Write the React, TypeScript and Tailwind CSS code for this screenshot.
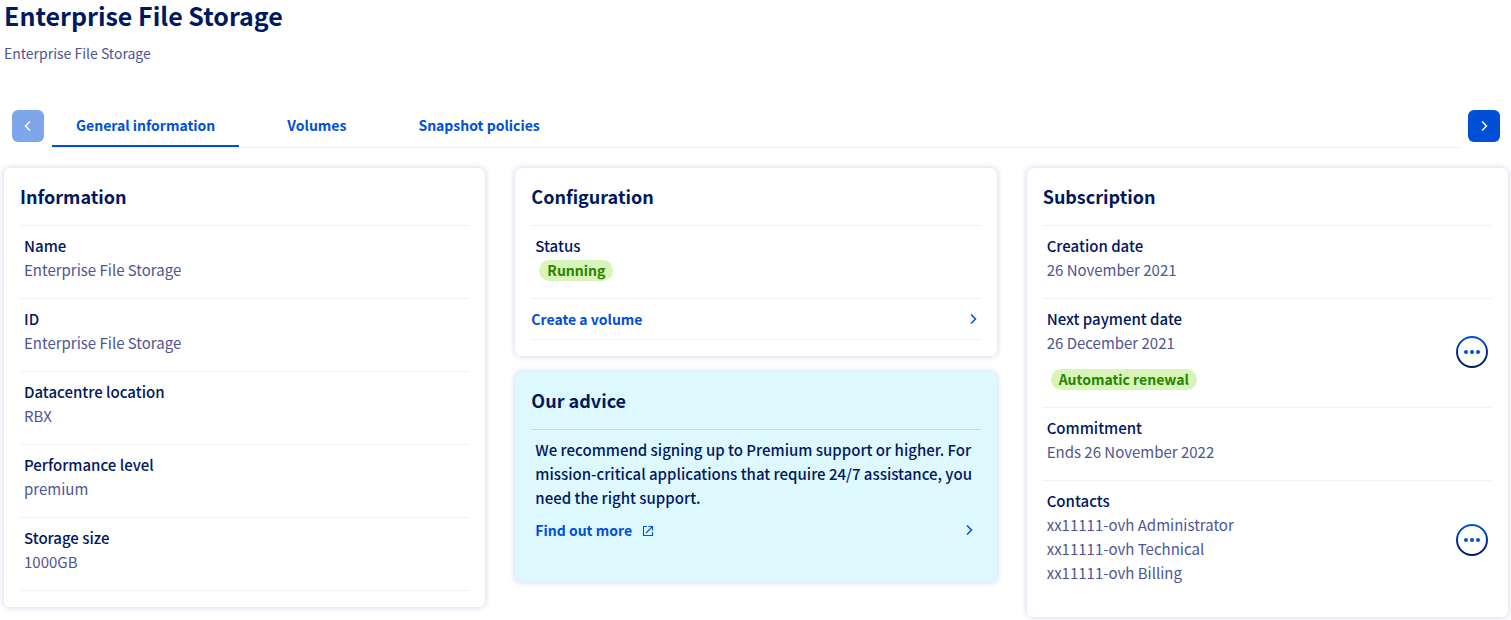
import type { ReactNode } from "react";

const INFORMATION = [
  { label: "Name", value: "Enterprise File Storage" },
  { label: "ID", value: "Enterprise File Storage" },
  { label: "Datacentre location", value: "RBX" },
  { label: "Performance level", value: "premium" },
  { label: "Storage size", value: "1000GB" },
];

const TABS = ["General information", "Volumes", "Snapshot policies"];

function Chevron({ direction = "right" }: { direction?: "left" | "right" }) {
  return (
    <svg width="16" height="16" viewBox="0 0 16 16" fill="none" stroke="currentColor" strokeWidth="1.5" aria-hidden="true">
      <path d={direction === "right" ? "M6 3.5 10.5 8 6 12.5" : "M10 3.5 5.5 8 10 12.5"} />
    </svg>
  );
}

function ExternalIcon() {
  return (
    <svg width="12" height="12" viewBox="0 0 12 12" fill="none" stroke="currentColor" strokeWidth="1.1" aria-hidden="true">
      <path d="M5 1.5H1.5V10.5H10.5V7M6.5 1.5H10.5V5.5M10.5 1.5 4 8" />
    </svg>
  );
}

function Card({ title, tone = "plain", children }: { title: string; tone?: "plain" | "advice"; children: ReactNode }) {
  const advice = tone === "advice";
  return (
    <section className={`rounded-md p-4 shadow-[0_0_6px_rgba(0,0,160,0.2)] ${advice ? "bg-[#def8ff]" : "bg-white"}`}>
      <h2 className={`border-b pb-4 text-[18px] leading-[25px] font-bold ${advice ? "border-[#b3e3ee]" : "border-[#f2f2f2]"}`}>
        {title}
      </h2>
      {children}
    </section>
  );
}

function Row({ label, last, action, children }: { label: string; last?: boolean; action?: string; children: ReactNode }) {
  return (
    <div className={`flex items-center justify-between px-1 pb-[2px] text-[15px] ${last ? "" : "border-b border-[#f2f2f2]"}`}>
      <dl className="pt-2 pb-[14px]">
        <dt className="font-medium">{label}</dt>
        <dd className="text-[#4d5592]">{children}</dd>
      </dl>
      {action && (
        <button type="button" aria-label={action} className="size-8 shrink-0 text-[#0050d7]">
          <svg width="32" height="32" viewBox="0 0 32 32" aria-hidden="true">
            <defs>
              <linearGradient id="ring" x1="0" y1="0" x2="0" y2="1">
                <stop offset="0" stopColor="#0050d7" />
                <stop offset="1" stopColor="#00185e" />
              </linearGradient>
            </defs>
            <circle cx="16" cy="16" r="15" fill="none" stroke="url(#ring)" strokeWidth="2" />
            <circle cx="10" cy="16" r="2" fill="currentColor" />
            <circle cx="16" cy="16" r="2" fill="currentColor" />
            <circle cx="22" cy="16" r="2" fill="currentColor" />
          </svg>
        </button>
      )}
    </div>
  );
}

function Badge({ children }: { children: ReactNode }) {
  return (
    <span className="ml-1 inline-block rounded-full bg-[#d9f4b8] px-2 align-middle text-[14px] leading-[21px] font-bold text-[#268403]">
      {children}
    </span>
  );
}

export default function App() {
  return (
    <main className="pr-[3px] pb-[3px] pl-1 font-['Noto_Sans_CJK_SC',sans-serif] text-[14px] leading-6 text-[#00185e]">
      <header>
        <h1 className="text-[25px] leading-[30px] font-bold">Enterprise File Storage</h1>
        <p className="pt-[11px]  text-[#4d5592]">Enterprise File Storage</p>
      </header>

      <nav className="mt-[45px] flex gap-2 px-2">
        <button type="button" aria-label="Previous tabs" disabled className="flex size-8 items-center justify-center rounded-md bg-[#0050d7] text-white opacity-50">
          <Chevron direction="left" />
        </button>
        <div role="tablist" className="flex flex-1 gap-6 border-b border-[#e6f0fa]">
          {TABS.map((tab, i) => (
            <button
              key={tab}
              type="button"
              role="tab"
              aria-selected={i === 0}
              className={`border-b-2 px-6 pt-[3px] pb-2 font-bold text-[#0050d7] ${i === 0 ? "border-[#0050d7]" : "border-transparent"}`}
            >
              {tab}
            </button>
          ))}
        </div>
        <button type="button" aria-label="Next tabs" className="flex size-8 items-center justify-center rounded-md bg-[#0050d7] text-white">
          <Chevron />
        </button>
      </nav>

      <div className="mt-5 grid grid-cols-3 items-start gap-[30px]">
        <Card title="Information">
          {INFORMATION.map(({ label, value }) => (
            <Row key={label} label={label}>
              {value}
            </Row>
          ))}
        </Card>

        <div className="flex flex-col gap-4">
          <Card title="Configuration">
            <Row label="Status">
              <div className="flex h-6 items-center">
                <Badge>Running</Badge>
              </div>
            </Row>
            <a href="#create" className="flex items-center justify-between border-b border-[#f2f2f2] py-2 font-bold text-[#0050d7]">
              Create a volume
              <Chevron />
            </a>
          </Card>
          <Card title="Our advice" tone="advice">
            <div className="px-1 pt-2 pb-6">
              <p className="text-[15px] font-medium">
                We recommend signing up to Premium support or higher. For mission-critical applications that require 24/7 assistance, you need the right support.
              </p>
              <a href="#support" className="mt-2 flex items-center justify-between font-bold text-[#0050d7]">
                <span className="flex items-center gap-[10px]">
                  Find out more
                  <span className="pt-[2px]">
                    <ExternalIcon />
                  </span>
                </span>
                <Chevron />
              </a>
            </div>
          </Card>
        </div>

        <Card title="Subscription">
          <Row label="Creation date">26 November 2021</Row>
          <Row label="Next payment date" action="Payment actions">
            <div>26 December 2021</div>
            <div className="flex h-9 items-center pt-3">
              <Badge>Automatic renewal</Badge>
            </div>
          </Row>
          <Row label="Commitment">Ends 26 November 2022</Row>
          <Row label="Contacts" action="Contact actions" last>
            <div>xx11111-ovh Administrator</div>
            <div>xx11111-ovh Technical</div>
            <div>xx11111-ovh Billing</div>
          </Row>
        </Card>
      </div>
    </main>
  );
}
